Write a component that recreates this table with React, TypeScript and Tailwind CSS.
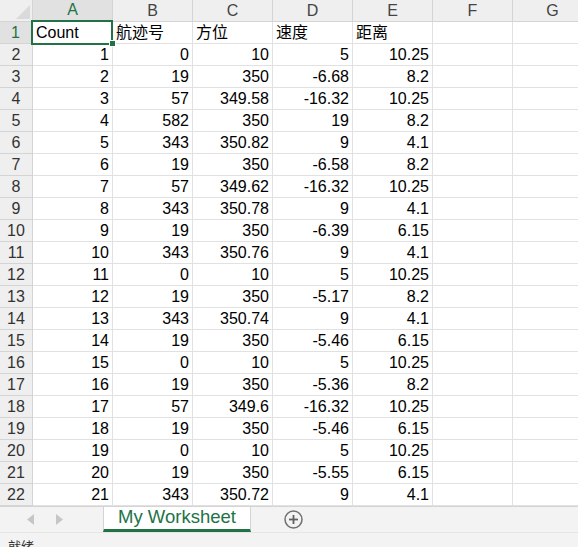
import React from "react";

const cols = ["A", "B", "C", "D", "E", "F", "G"];

const header = ["Count", "航迹号", "方位", "速度", "距离"];

const rows: (string | number)[][] = [
  [1, 0, 10, 5, 10.25],
  [2, 19, 350, -6.68, 8.2],
  [3, 57, 349.58, -16.32, 10.25],
  [4, 582, 350, 19, 8.2],
  [5, 343, 350.82, 9, 4.1],
  [6, 19, 350, -6.58, 8.2],
  [7, 57, 349.62, -16.32, 10.25],
  [8, 343, 350.78, 9, 4.1],
  [9, 19, 350, -6.39, 6.15],
  [10, 343, 350.76, 9, 4.1],
  [11, 0, 10, 5, 10.25],
  [12, 19, 350, -5.17, 8.2],
  [13, 343, 350.74, 9, 4.1],
  [14, 19, 350, -5.46, 6.15],
  [15, 0, 10, 5, 10.25],
  [16, 19, 350, -5.36, 8.2],
  [17, 57, 349.6, -16.32, 10.25],
  [18, 19, 350, -5.46, 6.15],
  [19, 0, 10, 5, 10.25],
  [20, 19, 350, -5.55, 6.15],
  [21, 343, 350.72, 9, 4.1],
];

const font = {
  fontFamily: '"Liberation Sans", Arial, "Noto Sans CJK SC", sans-serif',
};

function ColumnHeaders() {
  return (
    <div className="flex h-[22px] shrink-0">
      <div className="relative w-[33px] shrink-0 border-r border-b border-[#d4d4d4] bg-[#efefef]">
        <svg className="absolute left-0 top-0" width="33" height="22">
          <polygon points="30,5 30,19 16,19" fill="#dadada" />
        </svg>
      </div>
      {cols.map((c) => (
        <div
          key={c}
          className={
            c === "A"
              ? "w-[80px] shrink-0 border-r border-b-2 border-r-[#d4d4d4] border-b-[#217346] bg-[#e1e1e1] text-[#217346] flex items-center justify-center text-[16px]"
              : "w-[80px] shrink-0 border-r border-b border-[#d4d4d4] bg-[#efefef] text-[#444] flex items-center justify-center text-[16px]"
          }
        >
          {c}
        </div>
      ))}
    </div>
  );
}

function Row({ n, cells, first }: { n: number; cells: (string | number)[]; first?: boolean }) {
  return (
    <div className="flex h-[22px] shrink-0">
      <div
        className={
          first
            ? "w-[33px] shrink-0 border-r-2 border-b border-r-[#217346] border-b-[#d4d4d4] bg-[#e1e1e1] text-[#217346] flex items-center justify-center text-[16px]"
            : "w-[33px] shrink-0 border-r border-b border-[#d4d4d4] bg-[#efefef] text-[#333] flex items-center justify-center text-[16px]"
        }
      >
        {n}
      </div>
      {cols.map((c, i) => {
        const v = cells[i];
        return (
          <div
            key={c}
            className={
              "relative w-[80px] shrink-0 border-r border-b border-[#e1e1e1] flex items-center px-[3px] text-[16px] text-black whitespace-nowrap " +
              (first ? "justify-start" : "justify-end")
            }
          >
            {v !== undefined ? v : ""}
            {first && i === 0 && (
              <>
                <div className="absolute z-10 -left-[2px] -top-[2px] w-[82px] h-[25px] border-2 border-[#217346]" />
                <div className="absolute z-20 -right-[4px] -bottom-[4px] w-[7px] h-[7px] bg-[#217346] border border-white" />
              </>
            )}
          </div>
        );
      })}
    </div>
  );
}

export default function App() {
  return (
    <div className="w-[578px] h-[547px] overflow-hidden bg-white flex flex-col" style={font}>
      <div className="flex flex-col h-[506px] shrink-0 overflow-hidden">
        <ColumnHeaders />
        <Row n={1} cells={header} first />
        {rows.map((r, i) => (
          <Row key={i} n={i + 2} cells={r} />
        ))}
      </div>
      <div className="flex h-[26px] shrink-0 border-t border-[#d4d4d4] bg-[#f3f3f3]">
        <div className="w-[103px] shrink-0 flex items-center pl-[27px] gap-[22px]">
          <svg width="7" height="11" viewBox="0 0 7 11">
            <polygon points="7,0 7,11 0,5.5" fill="#c6c6c6" />
          </svg>
          <svg width="7" height="11" viewBox="0 0 7 11">
            <polygon points="0,0 0,11 7,5.5" fill="#c6c6c6" />
          </svg>
        </div>
        <div className="w-[148px] shrink-0 bg-white border-x border-[#d4d4d4] border-b-[3px] border-b-[#217346] flex items-center justify-center text-[18.5px] text-[#217346] leading-none pb-[1px]">
          My Worksheet
        </div>
        <div className="flex items-center pl-[33px]">
          <svg width="19" height="19" viewBox="0 0 19 19">
            <circle cx="9.5" cy="9.5" r="8.5" fill="none" stroke="#707070" strokeWidth="1.5" />
            <line x1="5" y1="9.5" x2="14" y2="9.5" stroke="#606060" strokeWidth="1.8" />
            <line x1="9.5" y1="5" x2="9.5" y2="14" stroke="#606060" strokeWidth="1.8" />
          </svg>
        </div>
      </div>
      <div className="flex-1 border-t border-[#e6e6e6] bg-[#f3f3f3] pl-[8px] pt-[7px] text-[13px] text-[#333] leading-none">
        就绪
      </div>
    </div>
  );
}
